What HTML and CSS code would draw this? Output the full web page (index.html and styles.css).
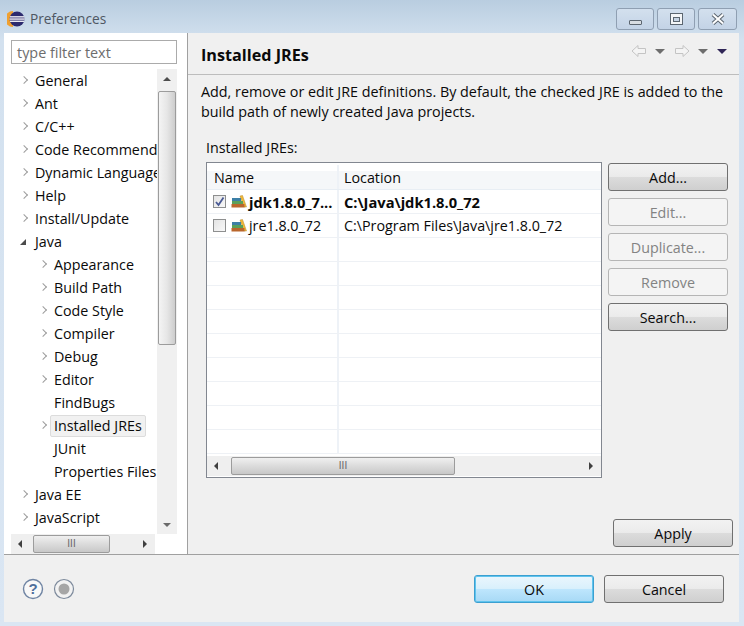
FILE: index.html
```html
<!DOCTYPE html>
<html lang="en">
<head>
  <meta charset="UTF-8" />
  <title>Preferences</title>
  <link rel="stylesheet" href="styles.css">
</head>
<body>
  <div class="titlebar">
    <svg class="logo" width="18" height="18" viewBox="0 0 18 18">
      <path d="M6 1 A8 8 0 0 0 6 17 Z" fill="#f0a030"/>
      <circle cx="10" cy="9" r="7.5" fill="#2c2a6e"/>
      <rect x="3" y="6.2" width="14" height="1.3" fill="#fff"/>
      <rect x="2.5" y="8.4" width="15" height="1.3" fill="#fff"/>
      <rect x="3" y="10.6" width="14" height="1.3" fill="#fff"/>
    </svg>
    <span class="title">Preferences</span>
    <div class="winbtns">
      <div class="winbtn"><span class="min-glyph"></span></div>
      <div class="winbtn"><span class="max-glyph"></span></div>
      <div class="winbtn wide">
        <svg width="14" height="12" viewBox="0 0 14 12"><path d="M2 1.5 L12 10.5 M12 1.5 L2 10.5" stroke="#5c6670" stroke-width="4"/><path d="M2 1.5 L12 10.5 M12 1.5 L2 10.5" stroke="#fff" stroke-width="2"/></svg>
      </div>
    </div>
  </div>

  <div class="client">
    <div class="main">
      <div class="sidebar">
        <div class="filter">type filter text</div>
        <div class="treebox">
          <div class="treeview">
            <ul class="tree">
              <li class="row"><i class="tw"></i>General</li>
              <li class="row"><i class="tw"></i>Ant</li>
              <li class="row"><i class="tw"></i>C/C++</li>
              <li class="row"><i class="tw"></i>Code Recommenders</li>
              <li class="row"><i class="tw"></i>Dynamic Languages</li>
              <li class="row"><i class="tw"></i>Help</li>
              <li class="row"><i class="tw"></i>Install/Update</li>
              <li class="row"><i class="tw open"></i>Java</li>
              <li class="row sub"><i class="tw"></i>Appearance</li>
              <li class="row sub"><i class="tw"></i>Build Path</li>
              <li class="row sub"><i class="tw"></i>Code Style</li>
              <li class="row sub"><i class="tw"></i>Compiler</li>
              <li class="row sub"><i class="tw"></i>Debug</li>
              <li class="row sub"><i class="tw"></i>Editor</li>
              <li class="row sub"><i class="tw none"></i>FindBugs</li>
              <li class="row sub"><i class="tw"></i><span class="selected">Installed JREs</span></li>
              <li class="row sub"><i class="tw none"></i>JUnit</li>
              <li class="row sub"><i class="tw none"></i>Properties Files</li>
              <li class="row"><i class="tw"></i>Java EE</li>
              <li class="row"><i class="tw"></i>JavaScript</li>
            </ul>
            <div class="vscroll">
              <span class="arrow up"></span>
              <div class="vthumb"></div>
              <span class="arrow down"></span>
            </div>
          </div>
          <div class="hscroll side">
            <span class="arrow left"></span>
            <div class="hthumb short"><span class="grip">III</span></div>
            <span class="arrow right"></span>
          </div>
        </div>
      </div>

      <div class="content">
        <div class="pagehead">
          <h1>Installed JREs</h1>
          <div class="nav">
            <svg width="16" height="14" viewBox="0 0 16 14"><path d="M1 7 L7 1.5 V4.5 H14.5 V9.5 H7 V12.5 Z" fill="#f4f4f4" stroke="#c4c4c4"/></svg>
            <span class="drop"></span>
            <svg width="16" height="14" viewBox="0 0 16 14"><path d="M15 7 L9 1.5 V4.5 H1.5 V9.5 H9 V12.5 Z" fill="#f4f4f4" stroke="#c4c4c4"/></svg>
            <span class="drop"></span>
            <span class="drop dark"></span>
          </div>
        </div>
        <p class="desc">Add, remove or edit JRE definitions. By default, the checked JRE is added to the build path of newly created Java projects.</p>
        <div class="tablabel">Installed JREs:</div>
        <div class="jres">
          <div class="tablewrap">
            <div class="table">
              <div class="thead">
                <div class="cname">Name</div>
                <div class="cloc">Location</div>
              </div>
              <div class="trow bold">
                <div class="cname">
                  <span class="check on">
                    <svg width="11" height="11" viewBox="0 0 11 11"><path d="M2 6 L4.5 9 L9.5 1.5" fill="none" stroke="#4a5a94" stroke-width="1.8"/></svg>
                  </span>
                  <svg class="book" width="16" height="16" viewBox="0 0 16 16"><use href="#books"/></svg>
                  <span>jdk1.8.0_7...</span>
                </div>
                <div class="cloc">C:\Java\jdk1.8.0_72</div>
              </div>
              <div class="trow">
                <div class="cname">
                  <span class="check"></span>
                  <svg class="book" width="16" height="16" viewBox="0 0 16 16"><use href="#books"/></svg>
                  <span>jre1.8.0_72</span>
                </div>
                <div class="cloc">C:\Program Files\Java\jre1.8.0_72</div>
              </div>
              <div class="trow"><div class="cname"></div><div class="cloc"></div></div>
              <div class="trow"><div class="cname"></div><div class="cloc"></div></div>
              <div class="trow"><div class="cname"></div><div class="cloc"></div></div>
              <div class="trow"><div class="cname"></div><div class="cloc"></div></div>
              <div class="trow"><div class="cname"></div><div class="cloc"></div></div>
              <div class="trow"><div class="cname"></div><div class="cloc"></div></div>
              <div class="trow"><div class="cname"></div><div class="cloc"></div></div>
              <div class="trow"><div class="cname"></div><div class="cloc"></div></div>
              <div class="trow"><div class="cname"></div><div class="cloc"></div></div>
            </div>
            <div class="hscroll">
              <span class="arrow left"></span>
              <div class="hthumb long"><span class="grip">III</span></div>
              <span class="arrow right"></span>
            </div>
          </div>
          <div class="sidebtns">
            <div class="btn">Add...</div>
            <div class="btn off">Edit...</div>
            <div class="btn off">Duplicate...</div>
            <div class="btn off">Remove</div>
            <div class="btn">Search...</div>
          </div>
        </div>
        <div class="applyrow"><div class="btn">Apply</div></div>
      </div>
    </div>

    <div class="footer">
      <svg width="22" height="22" viewBox="0 0 22 22">
        <circle cx="11" cy="11" r="9.5" fill="#f8f8f8" stroke="#6f84a3" stroke-width="1.4"/>
        <text x="11" y="16" text-anchor="middle" class="qmark">?</text>
      </svg>
      <svg class="rec" width="22" height="22" viewBox="0 0 22 22">
        <circle cx="11" cy="11" r="9.5" fill="#f2f2f2" stroke="#7d8a9c" stroke-width="1.2"/>
        <circle cx="11" cy="11" r="5.5" fill="#a6a6a6"/>
      </svg>
      <div class="footbtns">
        <div class="btn default">OK</div>
        <div class="btn">Cancel</div>
      </div>
    </div>
  </div>

  <svg width="0" height="0" class="defs">
    <defs>
      <g id="books">
        <path d="M9 2 L11.5 1.5 L15.5 13 L13 13 Z" fill="#f0b93a" stroke="#b5862a" stroke-width=".5"/>
        <rect x="1" y="4" width="9" height="3" fill="#3d7fa6"/>
        <rect x="1" y="7" width="11" height="3" fill="#5aa05a"/>
        <rect x="0.5" y="10" width="13" height="3.5" fill="#b9662c"/>
      </g>
    </defs>
  </svg>
</body>
</html>
```

FILE: styles.css
```css
html, body {
  height: 100%;
}

body {
  margin: 0;
  width: 744px;
  height: 626px;
  overflow: hidden;
  background: linear-gradient(180deg, #b9cde0 0, #d3e1ef 40px, #dae6f3 100%);
  font-family: "Open Sans", "Noto Sans", sans-serif;
  font-size: 14.3px;
  color: #0a0a0a;
  display: flex;
  flex-direction: column;
}

.titlebar {
  height: 33px;
  display: flex;
  align-items: center;
  padding: 0 7px 0 7px;
  box-sizing: border-box;
  flex: none;
}

.logo {
  margin-top: 4px;
  flex: none;
}

.title {
  margin-left: 5px;
  margin-top: 4px;
  color: #4e5763;
  font-size: 13.7px;
}

.winbtns {
  margin-left: auto;
  margin-top: 5px;
  display: flex;
  gap: 3px;
}

.winbtn {
  width: 38px;
  height: 22px;
  box-sizing: border-box;
  border: 1px solid #8f9fb2;
  border-radius: 3px;
  background: linear-gradient(180deg, #d3e0ee, #c3d3e6);
  display: flex;
  align-items: center;
  justify-content: center;
}

.winbtn.wide {
  width: 39px;
}

.min-glyph {
  width: 11px;
  height: 3px;
  margin-top: 7px;
  background: #d8dde2;
  border: 1px solid #5c6670;
  border-radius: 1px;
}

.max-glyph {
  width: 13px;
  height: 12px;
  border: 1px solid #5c6670;
  background: #f4f6f8;
  box-sizing: border-box;
  display: flex;
  align-items: center;
  justify-content: center;
}

.max-glyph::after {
  content: "";
  width: 7px;
  height: 5px;
  border: 1px solid #5c6670;
  background: #c6d4e4;
  box-sizing: border-box;
}

.client {
  margin: 0 5px 4px 4px;
  height: 589px;
  background: #f0f0f0;
  display: flex;
  flex-direction: column;
  flex: none;
}

.main {
  height: 521px;
  border-bottom: 1px solid #a0a0a0;
  display: flex;
  flex: none;
}

.sidebar {
  background: #fff;
  border-right: 1px solid #a0a0a0;
  padding: 7px 10px 0 7px;
  flex: none;
  width: 166px;
  display: flex;
  flex-direction: column;
}

.filter {
  height: 24px;
  box-sizing: border-box;
  border: 1px solid #ababab;
  padding-left: 5px;
  padding-top: 1px;
  line-height: 22px;
  color: #6d6d6d;
  font-size: 14.4px;
  flex: none;
}

.treebox {
  margin-top: 5px;
  flex: 1;
  display: flex;
  flex-direction: column;
  min-height: 0;
}

.treeview {
  height: 465px;
  display: flex;
  flex: none;
}

.tree {
  list-style: none;
  margin: 0;
  padding: 0;
  width: 146px;
  overflow: hidden;
  flex: none;
}

.row {
  height: 23px;
  line-height: 23px;
  display: flex;
  align-items: center;
  white-space: nowrap;
  padding-left: 9px;
}

.row.sub {
  padding-left: 28px;
}

.tw {
  width: 15px;
  height: 23px;
  position: relative;
  flex: none;
}

.tw::before {
  content: "";
  position: absolute;
  left: 1px;
  top: 8px;
  width: 5px;
  height: 5px;
  border-top: 1px solid #9b9b9b;
  border-right: 1px solid #9b9b9b;
  transform: rotate(45deg) scale(.95);
}

.tw.none::before {
  display: none;
}

.tw.open::before {
  left: 0;
  top: 9px;
  width: 0;
  height: 0;
  border: 0;
  border-left: 6px solid transparent;
  border-bottom: 6px solid #4b4b4b;
  transform: none;
}

.selected {
  margin-left: -4px;
  padding: 0 3px;
  line-height: 20px;
  background: #f1f1f1;
  border: 1px solid #dcdcdc;
  border-radius: 2px;
}

.vscroll {
  width: 20px;
  background: #f0f0f0;
  display: flex;
  flex-direction: column;
  align-items: center;
}

.vthumb {
  width: 18px;
  height: 254px;
  margin-top: 4px;
  box-sizing: border-box;
  border: 1px solid #9c9c9c;
  border-radius: 2px;
  background: linear-gradient(90deg, #f4f4f4, #e6e6e6 50%, #cdcdcd);
}

.arrow {
  width: 0;
  height: 0;
  flex: none;
}

.arrow.up {
  margin-top: 8px;
  margin-bottom: 6px;
  border-left: 4px solid transparent;
  border-right: 4px solid transparent;
  border-bottom: 4px solid #4d4d4d;
}

.arrow.down {
  margin-top: auto;
  margin-bottom: 7px;
  border-left: 4px solid transparent;
  border-right: 4px solid transparent;
  border-top: 4px solid #6a6a6a;
}

.arrow.left {
  border-top: 4px solid transparent;
  border-bottom: 4px solid transparent;
  border-right: 4px solid #404040;
  margin: 0 7px;
}

.arrow.right {
  margin-left: auto;
  margin-right: 8px;
  border-top: 4px solid transparent;
  border-bottom: 4px solid transparent;
  border-left: 4px solid #404040;
}

.hscroll {
  height: 20px;
  background: #efefef;
  display: flex;
  align-items: center;
  flex: none;
}

.hscroll.side {
  width: 144px;
}

.hthumb {
  height: 18px;
  box-sizing: border-box;
  border: 1px solid #9c9c9c;
  border-radius: 2px;
  background: linear-gradient(180deg, #f0f0f0, #dcdcdc 48%, #c8c8c8);
  display: flex;
  align-items: center;
  justify-content: center;
}

.hthumb.short {
  width: 77px;
  margin-left: 4px;
}

.hthumb.long {
  width: 224px;
  margin-left: 6px;
}

.grip {
  font-size: 10px;
  line-height: 10px;
  color: #666;
  font-family: "Liberation Sans", sans-serif;
}

.content {
  flex: 1;
  min-width: 0;
  display: flex;
  flex-direction: column;
}

.pagehead {
  height: 41px;
  border-bottom: 1px solid #bdbdbd;
  display: flex;
  align-items: center;
  padding: 0 12px 0 13px;
  flex: none;
}

h1 {
  margin: 0;
  padding-top: 2px;
  font-size: 16.2px;
  font-weight: 700;
}

.nav {
  margin-left: auto;
  margin-top: -5px;
  display: flex;
  align-items: center;
  gap: 8px;
}

.drop {
  width: 0;
  height: 0;
  border-left: 5px solid transparent;
  border-right: 5px solid transparent;
  border-top: 5px solid #6d6d6d;
  margin-right: 1px;
}

.drop.dark {
  border-top-color: #2f2556;
  margin-right: 0;
}

.desc {
  margin: 7px 10px 0 13px;
  line-height: 20px;
  font-size: 14.35px;
}

.tablabel {
  margin: 16px 0 0 18px;
  height: 19px;
  line-height: 19px;
}

.jres {
  margin: 5px 11px 0 18px;
  display: flex;
  gap: 6px;
}

.tablewrap {
  width: 396px;
  height: 316px;
  box-sizing: border-box;
  border: 1px solid #828790;
  background: #fff;
  display: flex;
  flex-direction: column;
  flex: none;
}

.table {
  height: 293px;
  overflow: hidden;
  flex: none;
}

.thead {
  height: 27px;
  padding-top: 2px;
  display: flex;
  background: linear-gradient(180deg, #fff 0, #fff 30%, #f5f7f9 30%, #f5f7f9 100%);
  border-bottom: 1px solid #e8eef4;
  box-sizing: border-box;
}

.trow {
  height: 24px;
  display: flex;
  border-bottom: 1px solid #eef1f5;
  box-sizing: border-box;
}

.cname {
  width: 132px;
  box-sizing: border-box;
  padding-left: 7px;
  border-right: 2px solid #eef2f7;
  display: flex;
  align-items: center;
  white-space: nowrap;
  flex: none;
}

.cloc {
  padding-left: 5px;
  display: flex;
  align-items: center;
  white-space: nowrap;
}

.trow .cname {
  padding-left: 5px;
}

.bold {
  font-weight: 700;
  font-size: 14.7px;
}

.check {
  width: 13px;
  height: 13px;
  box-sizing: border-box;
  border: 1px solid #8e8f8f;
  background: linear-gradient(135deg, #e4e4e4, #f8f8f8);
  flex: none;
  display: flex;
  align-items: center;
  justify-content: center;
  margin-left: 1px;
}

.book {
  margin-left: 5px;
  margin-right: 2px;
  flex: none;
}

.sidebtns {
  display: flex;
  flex-direction: column;
  gap: 7px;
  margin-top: 1px;
}

.btn {
  width: 120px;
  height: 28px;
  box-sizing: border-box;
  padding-top: 1px;
  border: 1px solid #707070;
  border-radius: 3px;
  background: linear-gradient(180deg, #f2f2f2 0, #ebebeb 48%, #dcdcdc 50%, #cfcfcf 100%);
  display: flex;
  align-items: center;
  justify-content: center;
}

.btn.off {
  border-color: #b5b5b5;
  background: #f4f4f4;
  color: #838383;
}

.btn.default {
  border-color: #3c9fd0;
  background: linear-gradient(180deg, #eaf6fd 0, #d9f0fc 48%, #bee6fd 50%, #a7d9f5 100%);
  box-shadow: inset 0 0 0 1px #5fc4ee;
}

.applyrow {
  margin-top: 41px;
  padding-left: 425px;
}

.footer {
  flex: 1;
  display: flex;
  align-items: center;
  padding: 0 15px 0 18px;
}

.footer svg {
  flex: none;
  margin-top: 1px;
}

.rec {
  margin-left: 9px;
}

.qmark {
  font-family: "Liberation Sans", sans-serif;
  font-size: 15px;
  font-weight: 700;
  fill: #4f6f9c;
}

.footbtns {
  margin-left: auto;
  display: flex;
  gap: 10px;
}

.defs {
  position: absolute;
}
```
